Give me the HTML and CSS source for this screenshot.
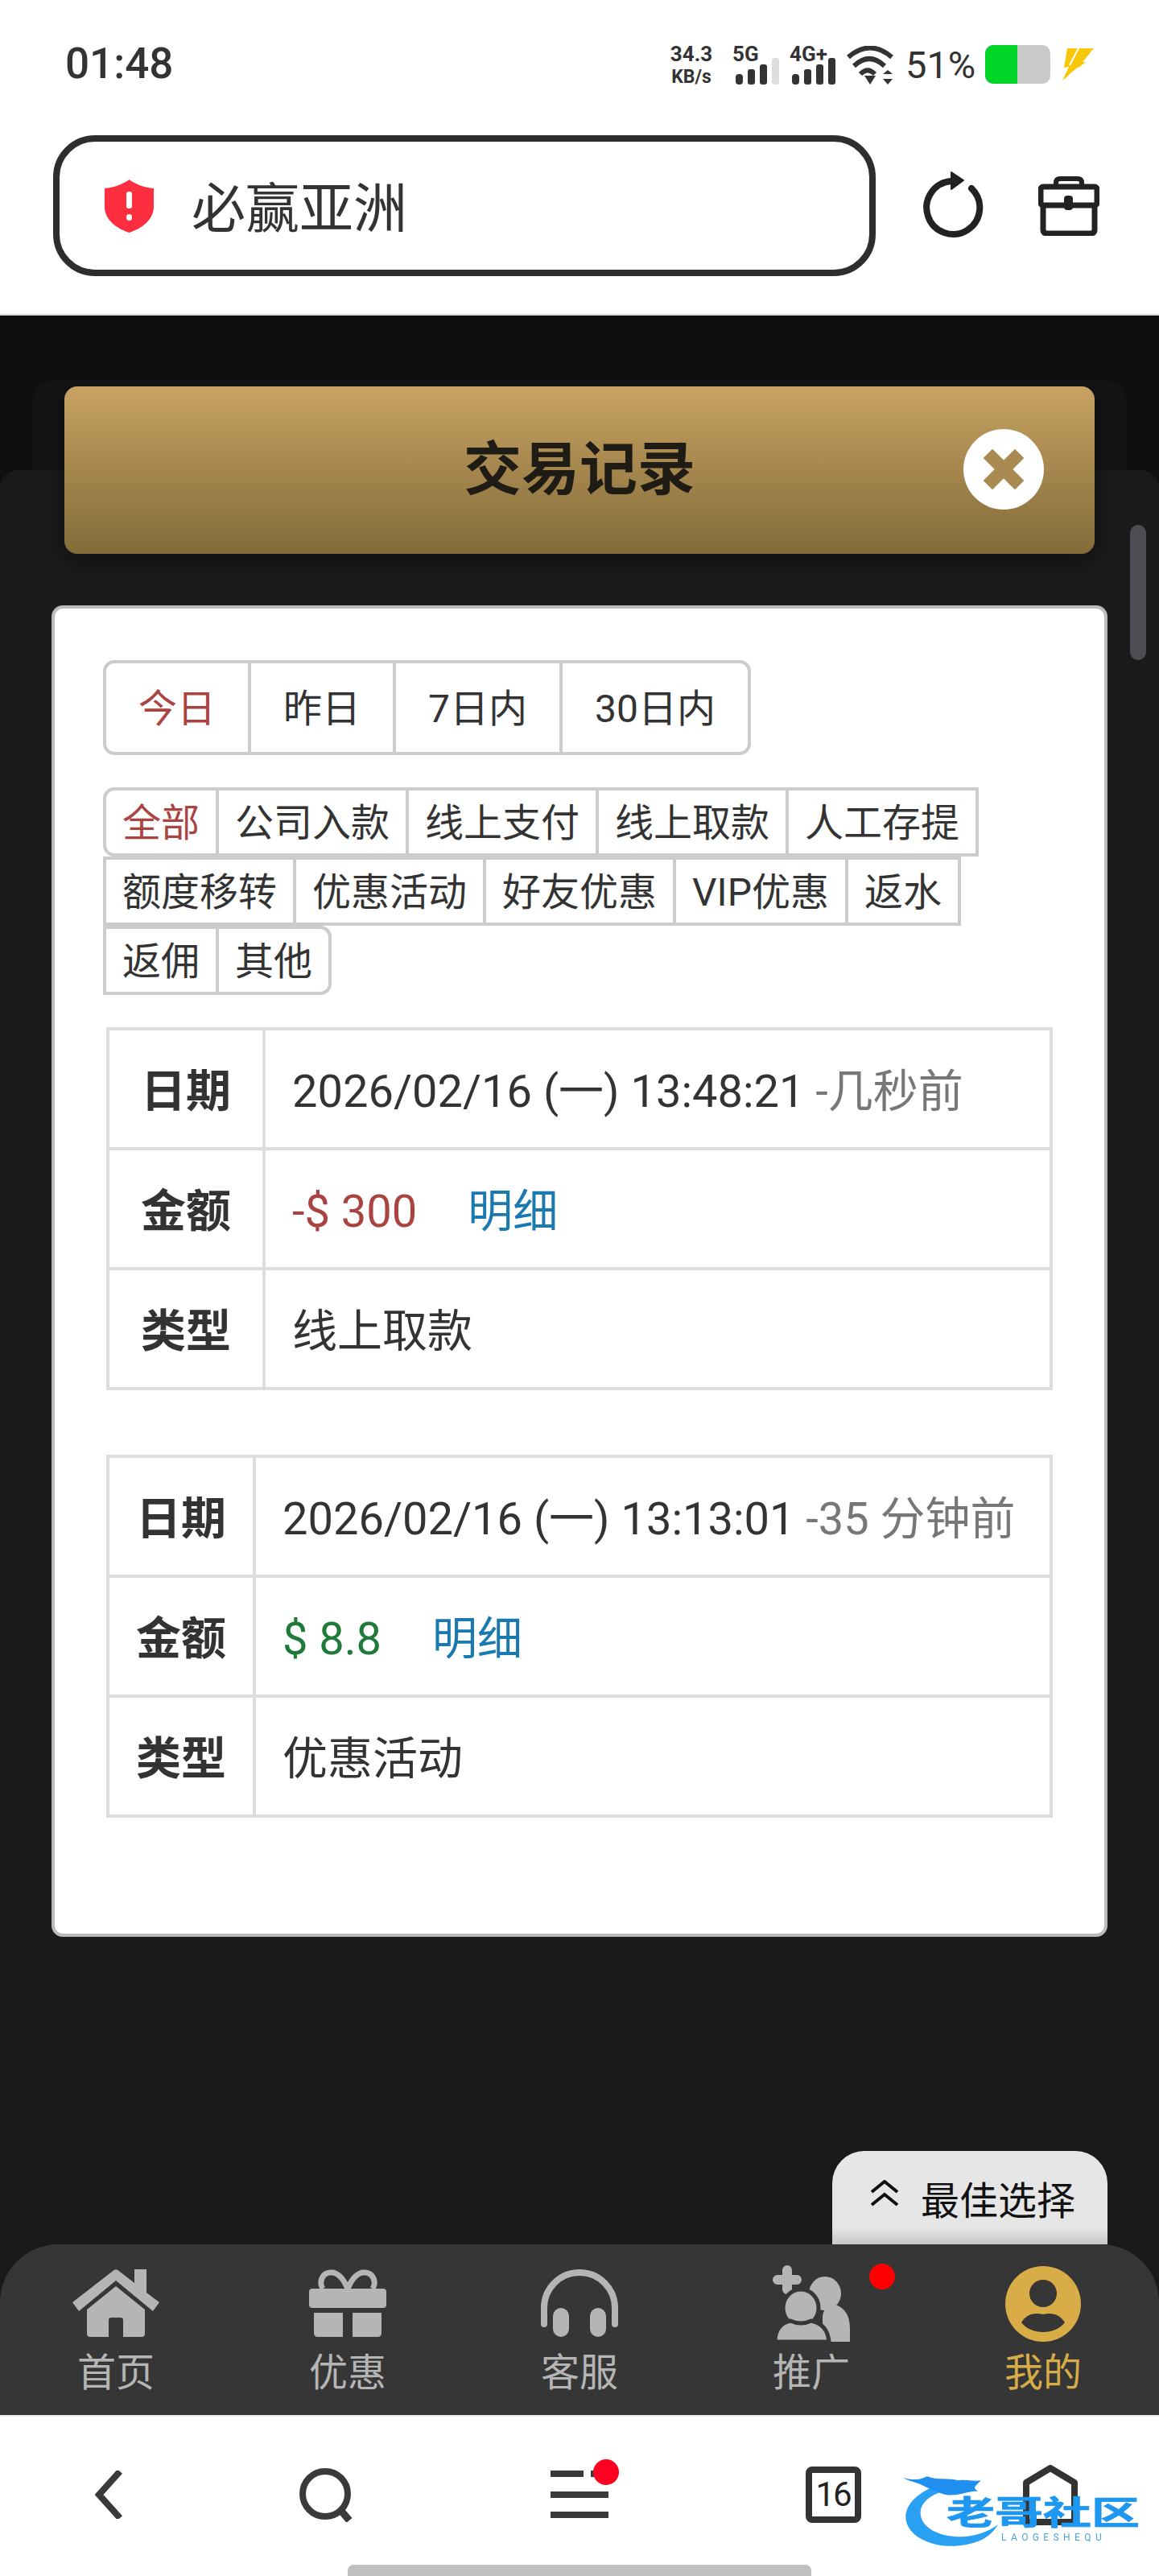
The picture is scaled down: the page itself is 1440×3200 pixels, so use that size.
FILE: index.html
```html
<!DOCTYPE html>
<html lang="zh-CN">
<head>
  <meta charset="UTF-8" />
  <meta name="viewport" content="width=device-width, initial-scale=1.0" />
  <title>交易记录</title>
  <link rel="stylesheet" href="styles.css">
</head>
<body>
  <header class="top">
    <div class="status-bar">
      <span class="clock">01:48</span>
      <div class="status-icons">
        <div class="speed"><span class="speed-num">34.3</span><span class="speed-unit">KB/s</span></div>
        <svg class="signal signal-5g" width="58" height="56" viewBox="0 -8 58 56">
          <text class="signal-text" x="0" y="19">5G</text>
          <rect x="4" y="35" width="9" height="13" rx="4" fill="#333"/>
          <rect x="19" y="29" width="9" height="19" rx="3" fill="#333"/>
          <rect x="34" y="23" width="9" height="25" rx="3" fill="#333"/>
          <rect x="49" y="15" width="9" height="33" rx="3" fill="#ddd"/>
        </svg>
        <svg class="signal signal-4g" width="60" height="56" viewBox="0 -8 60 56">
          <text class="signal-text" x="0" y="19">4G+</text>
          <rect x="3" y="35" width="9" height="13" rx="4" fill="#333"/>
          <rect x="18" y="29" width="9" height="19" rx="3" fill="#333"/>
          <rect x="33" y="23" width="9" height="25" rx="3" fill="#333"/>
          <rect x="48" y="15" width="9" height="33" rx="3" fill="#333"/>
        </svg>
        <svg class="wifi" width="58" height="48" viewBox="0 0 58 48">
          <path d="M2 14 Q29 -9 56 14 M9 25 Q28 7 47 25 M17 35 Q26 26 35 35" fill="none" stroke="#333" stroke-width="6"/>
          <polygon points="22,37 36,37 29,48" fill="#333"/>
          <polygon points="45,35 51,30 57,35" fill="#333"/>
          <polygon points="45,41 57,41 51,48" fill="#333"/>
        </svg>
        <span class="battery-pct">51%</span>
        <div class="battery"><div class="battery-fill"></div></div>
        <svg class="bolt" width="40" height="40" viewBox="0 0 40 40">
          <polygon points="6,0 39,0 25,17 29,17 0,40 8,23 2,24" fill="#f8c70a"/>
          <path d="M20 0 L9 21 M20 24 L8 34" stroke="#fff" stroke-width="2"/>
        </svg>
      </div>
    </div>
    <div class="address-row">
      <div class="address-bar">
        <svg class="shield" width="61" height="66" viewBox="0 0 61 66">
          <path d="M30.5 0 C38 6 50 10 61 11 V34 C61 50 46 61 30.5 66 C15 61 0 50 0 34 V11 C11 10 23 6 30.5 0Z" fill="#fc2e40"/>
          <rect x="27" y="15" width="7" height="21" rx="3" fill="#fff"/>
          <rect x="27" y="43" width="7" height="8" rx="3.5" fill="#fff"/>
        </svg>
        <span class="address-text">必赢亚洲</span>
      </div>
      <svg class="refresh" width="80" height="86" viewBox="0 0 80 86">
        <path d="M64 21 A33 33 0 1 1 39 12" fill="none" stroke="#222" stroke-width="8" stroke-linecap="round"/>
        <polygon points="39,1 54,11 39,22" fill="#222" stroke="#222" stroke-width="2" stroke-linejoin="round"/>
      </svg>
      <svg class="toolbox" width="76" height="74" viewBox="0 0 76 74">
        <path d="M22 12 V8 Q22 3 27 3 H49 Q54 3 54 8 V12" fill="none" stroke="#222" stroke-width="6"/>
        <rect x="3" y="13" width="70" height="23" rx="3" fill="none" stroke="#222" stroke-width="7"/>
        <path d="M6 36 V66 Q6 71 11 71 H65 Q70 71 70 66 V36" fill="none" stroke="#222" stroke-width="7"/>
        <rect x="32" y="24" width="11" height="18" rx="4" fill="#222"/>
      </svg>
    </div>
  </header>

  <main class="page">
    <div class="layer layer-back"></div>
    <div class="layer layer-front"></div>

    <div class="title-bar">
      <h1>交易记录</h1>
      <svg class="close-btn" width="100" height="100" viewBox="0 0 100 100">
        <circle cx="50" cy="50" r="50" fill="#fff"/>
        <path d="M36 36 L64 64 M64 36 L36 64" stroke="#a98a50" stroke-width="16" stroke-linecap="square"/>
      </svg>
    </div>

    <section class="card">
      <div class="range-tabs">
        <a class="range-tab active">今日</a>
        <a class="range-tab">昨日</a>
        <a class="range-tab">7日内</a>
        <a class="range-tab">30日内</a>
      </div>

      <div class="type-tabs">
        <a class="type-tab first active">全部</a>
        <a class="type-tab">公司入款</a>
        <a class="type-tab">线上支付</a>
        <a class="type-tab">线上取款</a>
        <a class="type-tab">人工存提</a>
        <a class="type-tab">额度移转</a>
        <a class="type-tab">优惠活动</a>
        <a class="type-tab">好友优惠</a>
        <a class="type-tab">VIP优惠</a>
        <a class="type-tab">返水</a>
        <a class="type-tab">返佣</a>
        <a class="type-tab last">其他</a>
      </div>

      <table class="record record-a">
        <tr>
          <th>日期</th>
          <td>2026/02/16 (一) 13:48:21 <span class="ago">-几秒前</span></td>
        </tr>
        <tr>
          <th>金额</th>
          <td><span class="minus">-$ 300</span><a class="detail">明细</a></td>
        </tr>
        <tr>
          <th>类型</th>
          <td>线上取款</td>
        </tr>
      </table>

      <table class="record record-b">
        <tr>
          <th>日期</th>
          <td>2026/02/16 (一) 13:13:01 <span class="ago">-35 分钟前</span></td>
        </tr>
        <tr>
          <th>金额</th>
          <td><span class="plus">$ 8.8</span><a class="detail">明细</a></td>
        </tr>
        <tr>
          <th>类型</th>
          <td>优惠活动</td>
        </tr>
      </table>
    </section>

    <div class="scroll-thumb"></div>

    <div class="best-tab">
      <svg width="36" height="33" viewBox="0 0 36 33">
        <path d="M2 15 L18 2 L34 15 M2 31 L18 18 L34 31" fill="none" stroke="#111" stroke-width="4"/>
      </svg>
      <span class="best-label">最佳选择</span>
    </div>
  </main>

  <nav class="bottom-nav">
    <a class="nav-item">
      <span class="nav-icon">
        <svg width="108" height="84" viewBox="0 0 108 84">
          <path d="M51 1.5 Q54 -1 57 1.5 L77 17 V0 H92 V29 L108 41 L100 52 L54 14 L8 52 L0 41Z" fill="#b5b5b5"/>
          <path d="M54 21 L90 50 V80 Q90 84 86 84 H63 V63 Q63 60 60 60 H48 Q45 60 45 63 V84 H22 Q18 84 18 80 V50Z" fill="#b5b5b5"/>
        </svg>
      </span>
      <span class="nav-label">首页</span>
    </a>
    <a class="nav-item">
      <span class="nav-icon">
        <svg width="96" height="84" viewBox="0 0 96 84">
          <path d="M48 24 C42 10 34 3 26 4 C16 5 12 16 17 24 M48 24 C54 10 62 3 70 4 C80 5 84 16 79 24" fill="none" stroke="#b5b5b5" stroke-width="7"/>
          <rect x="0" y="24" width="96" height="24" rx="4" fill="#b5b5b5"/>
          <path d="M6 54 H42 V84 H11 Q6 84 6 79Z M54 54 H90 V79 Q90 84 85 84 H54Z" fill="#b5b5b5"/>
        </svg>
      </span>
      <span class="nav-label">优惠</span>
    </a>
    <a class="nav-item">
      <span class="nav-icon">
        <svg width="96" height="84" viewBox="0 0 96 84">
          <path d="M4 68 V48 A44 44 0 0 1 92 48 V68" fill="none" stroke="#b5b5b5" stroke-width="8" stroke-linecap="round"/>
          <rect x="15" y="48" width="20" height="36" rx="10" fill="#b5b5b5"/>
          <rect x="61" y="48" width="20" height="36" rx="10" fill="#b5b5b5"/>
        </svg>
      </span>
      <span class="nav-label">客服</span>
    </a>
    <a class="nav-item">
      <span class="nav-icon">
        <svg class="promo-icon" width="96" height="96" viewBox="0 0 96 96">
          <path d="M18 7 V31 M6 19 H30" stroke="#b5b5b5" stroke-width="12" stroke-linecap="round"/>
          <ellipse cx="65" cy="36" rx="20" ry="21" fill="#b5b5b5"/>
          <path d="M62 96 V66 Q62 52 78 50 Q96 56 96 80 V96Z" fill="#b5b5b5"/>
          <ellipse cx="35" cy="54" rx="22" ry="23" fill="#b5b5b5" stroke="#363636" stroke-width="5"/>
          <path d="M3 96 Q3 74 22 70 Q35 76 48 70 Q68 74 70 96Z" fill="#b5b5b5" stroke="#363636" stroke-width="5"/>
        </svg>
      </span>
      <span class="nav-label">推广</span>
      <span class="nav-dot"></span>
    </a>
    <a class="nav-item current">
      <span class="nav-icon">
        <svg width="94" height="94" viewBox="0 0 94 94">
          <circle cx="47" cy="47" r="47" fill="#d8ad47"/>
          <circle cx="47" cy="34" r="17" fill="#363636"/>
          <path d="M20 70 C26 60 36 57 47 60 C58 57 68 60 74 70 C68 78 58 82 47 82 C36 82 26 78 20 70Z" fill="#363636"/>
        </svg>
      </span>
      <span class="nav-label">我的</span>
    </a>
  </nav>

  <footer class="toolbar">
    <div class="tool-row">
      <svg width="34" height="60" viewBox="0 0 34 60">
        <path d="M31 1 L5 30 L31 59" fill="none" stroke="#3a3a3a" stroke-width="8"/>
      </svg>
      <svg width="67" height="67" viewBox="0 0 67 67">
        <circle cx="32" cy="32" r="28" fill="none" stroke="#3a3a3a" stroke-width="8"/>
        <path d="M51 52 L62 65" stroke="#3a3a3a" stroke-width="9"/>
      </svg>
      <svg class="menu-icon" width="72" height="60" viewBox="0 0 72 60">
        <path d="M0 4 H41 M50 4 H56 M0 30 H72 M0 55 H72" stroke="#3a3a3a" stroke-width="8"/>
        <circle cx="69" cy="2" r="16" fill="#ff0022"/>
      </svg>
      <div class="tab-count">16</div>
      <svg width="68" height="75" viewBox="0 0 68 75">
        <path d="M4 71 V22 L34 4 L64 22 V71Z" fill="none" stroke="#333" stroke-width="8" stroke-linejoin="round"/>
      </svg>
    </div>
    <div class="home-handle"></div>

    <div class="logo">
      <svg class="logo-dragon" width="300" height="103" viewBox="120 190 900 310">
        <path d="M280 250 C170 290 130 340 135 390 C145 460 240 495 320 490 C400 485 450 460 480 410 C440 440 380 460 320 455 C240 450 185 410 190 360 C195 320 240 290 300 280Z" fill="#2aa0f2"/>
        <path d="M125 235 C180 250 200 235 215 230 C250 245 300 235 330 245 C360 240 390 250 415 245 C400 265 380 270 405 285 C370 285 340 300 300 300 C270 300 240 280 210 270 C190 255 150 250 125 235Z" fill="#1f8ff0"/>
      </svg>
      <span class="logo-name">老哥社区</span>
      <span class="logo-sub">LAOGESHEQU</span>
    </div>
  </footer>
</body>
</html>
```

FILE: styles.css
```css
* {
  box-sizing: border-box;
}

body {
  margin: 0;
  width: 1440px;
  height: 3200px;
  overflow: hidden;
  display: flex;
  flex-direction: column;
  background: #1a1a1a;
  color: #333;
  font-family: Roboto, "Noto Sans CJK SC", sans-serif;
}

svg {
  display: block;
  flex: none;
}

/* status bar + address bar */
.top {
  height: 392px;
  background: #fff;
  border-bottom: 2px solid #d8d8d8;
}

.status-bar {
  height: 168px;
  padding: 0 80px 0 81px;
  display: flex;
  align-items: flex-start;
}

.clock {
  margin-top: 49px;
  font-size: 53px;
  line-height: 60px;
  font-weight: 500;
}

.status-icons {
  margin-left: auto;
  margin-top: 57px;
  display: flex;
  align-items: flex-start;
}

.speed {
  width: 56px;
  display: flex;
  flex-direction: column;
  align-items: center;
  font-weight: 700;
}

.speed-num {
  font-size: 26px;
  line-height: 20px;
}

.speed-unit {
  margin-top: 9px;
  font-size: 23px;
  line-height: 19px;
}

.signal {
  margin-top: -8px;
}

.signal-text {
  font-family: Roboto, sans-serif;
  font-size: 26px;
  font-weight: 700;
  fill: #333;
}

.signal-5g {
  margin-left: 23px;
}

.signal-4g {
  margin-left: 13px;
}

.wifi {
  margin-left: 11px;
}

.battery-pct {
  margin-left: 15px;
  width: 86px;
  font-size: 47px;
  line-height: 48px;
  white-space: nowrap;
}

.battery {
  margin: -1px 0 0 13px;
  width: 81px;
  height: 48px;
  border-radius: 10px;
  background: #c9c9c9;
  overflow: hidden;
}

.battery-fill {
  width: 40px;
  height: 100%;
  background: #00d62a;
}

.bolt {
  margin: 3px 0 0 15px;
}

.address-row {
  height: 175px;
  padding-left: 66px;
  display: flex;
  align-items: center;
}

.address-bar {
  width: 1022px;
  height: 175px;
  padding-left: 56px;
  border: 8px solid #2e2e2e;
  border-radius: 52px;
  display: flex;
  align-items: center;
}

.address-text {
  margin: 8px 0 0 47px;
  font-size: 67px;
  line-height: 80px;
}

.refresh {
  margin-left: 55px;
}

.toolbox {
  margin-left: 67px;
}

/* dark sheet with the record list */
.page {
  position: relative;
  flex: 1;
  min-height: 0;
  padding-top: 88px;
  background: #0f0f0f;
}

.layer {
  position: absolute;
}

.layer-back {
  top: 80px;
  left: 40px;
  right: 40px;
  height: 200px;
  background: #141414;
  border-radius: 30px 30px 0 0;
}

.layer-front {
  top: 192px;
  left: 0;
  right: 0;
  bottom: 0;
  background: #1a1a1a;
  border-radius: 22px 22px 0 0;
}

.title-bar {
  position: relative;
  margin: 0 80px;
  height: 208px;
  border-radius: 16px;
  background: linear-gradient(#c8a263, #826b38);
  box-shadow: 0 8px 24px rgba(0, 0, 0, 0.35);
  display: flex;
  align-items: center;
  justify-content: center;
}

.title-bar h1 {
  margin: 0;
  font-size: 72px;
  line-height: 84px;
  font-weight: 700;
  color: #1f1c16;
}

.close-btn {
  position: absolute;
  right: 63px;
  top: 53px;
}

.card {
  position: relative;
  margin: 64px 64px 0;
  height: 1654px;
  padding: 64px 60px 0;
  background: #fff;
  border: 4px solid #bbb;
  border-radius: 14px;
}

.range-tabs {
  display: inline-flex;
  vertical-align: top;
  height: 118px;
  border: 4px solid #ccc;
  border-radius: 14px;
}

.range-tab {
  padding: 4px 40px 0;
  font-size: 48px;
  line-height: 106px;
  border-left: 4px solid #ccc;
}

.range-tab:first-child {
  border-left: 0;
}

.active {
  color: #a94442;
}

.type-tabs {
  margin-top: 40px;
  display: flex;
  flex-wrap: wrap;
}

.type-tab {
  height: 86px;
  margin-right: -4px;
  padding: 4px 20px 0;
  font-size: 48px;
  line-height: 74px;
  border: 4px solid #ccc;
}

.type-tab.first {
  border-radius: 14px 0 0 14px;
}

.type-tab.last {
  border-radius: 0 14px 14px 0;
}

.record {
  width: 1176px;
  margin: 40px auto 0;
  border-collapse: collapse;
  table-layout: fixed;
  font-size: 56px;
}

.record-b {
  margin-top: 80px;
}

.record th,
.record td {
  height: 149px;
  padding: 0 0 4px;
  border: 4px solid #ddd;
  white-space: nowrap;
}

.record th {
  text-align: center;
  font-weight: 700;
}

.record-a th {
  width: 194px;
}

.record-a td {
  padding-left: 33px;
}

.record-b th {
  width: 182px;
}

.record-b td {
  padding-left: 33px;
}

.ago {
  color: #777;
}

.minus {
  color: #a94442;
}

.plus {
  color: #1f7a3a;
}

.detail {
  margin-left: 63px;
  color: #1a7ab0;
}

.scroll-thumb {
  position: absolute;
  top: 260px;
  right: 16px;
  width: 20px;
  height: 168px;
  border-radius: 10px;
  background: #4d4e54;
}

.best-tab {
  position: absolute;
  right: 64px;
  bottom: 0;
  width: 342px;
  height: 116px;
  padding: 0 0 12px 47px;
  display: flex;
  align-items: center;
  gap: 27px;
  font-size: 48px;
  color: #111;
  background: linear-gradient(#e6e6e6 82%, #c8c8c8);
  border-radius: 40px 40px 0 0;
}

.best-label {
  margin-top: 12px;
}

/* app tab bar */
.bottom-nav {
  height: 212px;
  display: grid;
  grid-template-columns: repeat(5, 288px);
  background: #363636;
  border-radius: 72px 72px 0 0;
}

.nav-item {
  position: relative;
  display: flex;
  flex-direction: column;
  align-items: center;
  color: #b5b5b5;
}

.nav-icon {
  height: 130px;
  padding-top: 31px;
  display: flex;
  justify-content: center;
}

.promo-icon {
  margin-top: -6px;
}

.nav-item.current {
  color: #d8ad47;
}

.nav-item.current svg {
  margin-top: -4px;
}

.nav-label {
  font-size: 48px;
  line-height: 60px;
}

.nav-dot {
  position: absolute;
  top: 24px;
  left: 216px;
  width: 32px;
  height: 32px;
  border-radius: 50%;
  background: #ff0000;
}

/* browser toolbar */
.toolbar {
  position: relative;
  height: 200px;
  background: #fff;
  border-top: 2px solid #eee;
}

.tool-row {
  height: 184px;
  padding-top: 10px;
  display: grid;
  grid-template-columns: 270px 270px 360px 270px 270px;
  align-items: center;
  justify-items: center;
}

.menu-icon {
  overflow: visible;
}

.tab-count {
  width: 69px;
  height: 70px;
  border: 8px solid #333;
  border-radius: 8px;
  text-align: center;
  font-size: 42px;
  line-height: 54px;
  letter-spacing: -2px;
  color: #222;
}

.home-handle {
  width: 576px;
  height: 14px;
  margin: 0 auto;
  background: #c0c0c0;
  border-radius: 7px 7px 0 0;
}

.logo {
  position: absolute;
  left: 1120px;
  top: 61px;
  width: 300px;
  height: 105px;
  filter: blur(0.7px);
}

.logo-name {
  position: absolute;
  left: 56px;
  top: 29px;
  font-size: 60px;
  line-height: 60px;
  font-weight: 700;
  color: #1d97f0;
  -webkit-text-stroke: 1px #1d97f0;
  white-space: nowrap;
  transform: scaleY(0.68);
}

.logo-sub {
  position: absolute;
  left: 124px;
  top: 82px;
  font-size: 12px;
  line-height: 14px;
  letter-spacing: 5.4px;
  color: #4ba4d8;
  white-space: nowrap;
}
```
